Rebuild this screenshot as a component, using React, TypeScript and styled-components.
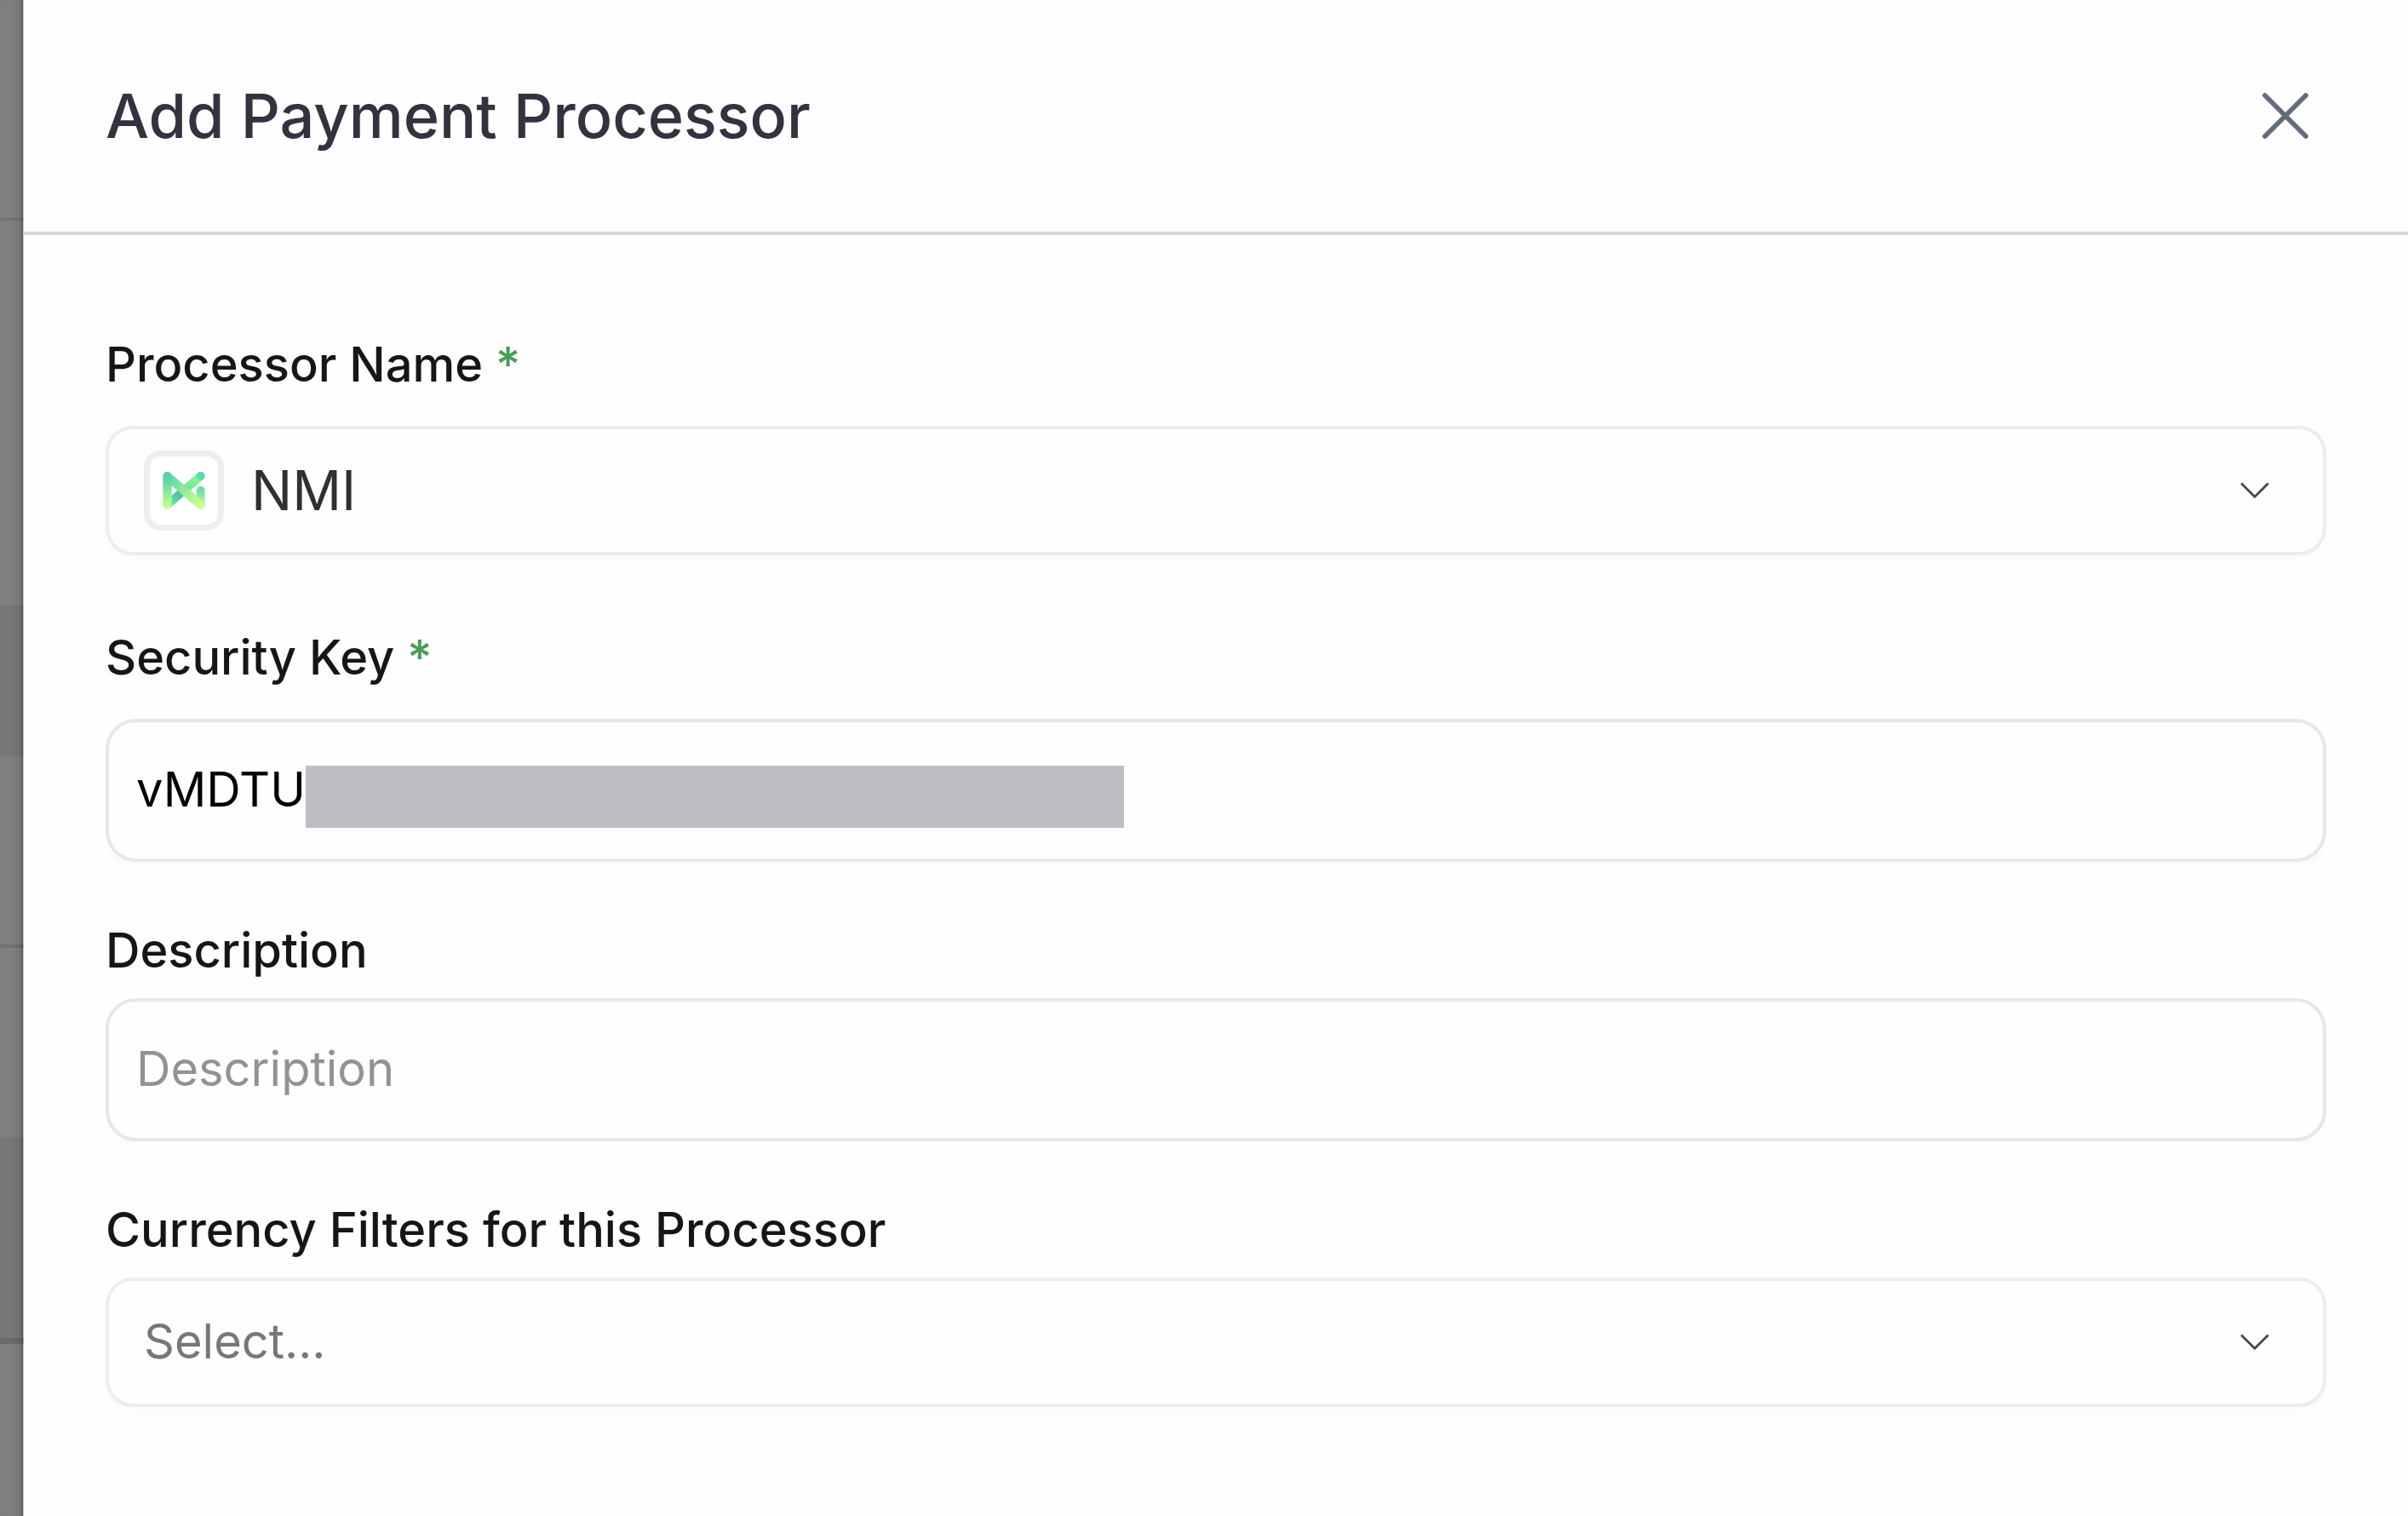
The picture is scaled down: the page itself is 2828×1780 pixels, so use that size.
import React from 'react';
import styled, { createGlobalStyle } from 'styled-components';

const GlobalStyle = createGlobalStyle`
  *, *::before, *::after { box-sizing: border-box; }
  body {
    margin: 0;
    background: #fefefe;
    font-family: Inter, "Liberation Sans", sans-serif;
  }
  button, input, select { font: inherit; }
`;

const Page = styled.div`
  display: grid;
  grid-template-columns: 28px minmax(0, 1fr);
  min-height: 100vh;
`;

const Backdrop = styled.div`
  display: flex;
  flex-direction: column;
  background: #7f7f7f;
  box-shadow: inset -1px 0 0 #c8c8c8, inset -3px 0 0 #626262, inset -12px 0 12px -8px #6a6a6a;
`;

const Band = styled.div<{ $height: number; $shaded?: boolean; $line?: number }>`
  flex: none;
  height: ${(p) => p.$height}px;
  background: ${(p) => (p.$shaded ? 'rgba(0, 0, 0, 0.06)' : 'transparent')};
  border-bottom: ${(p) => p.$line ?? 0}px solid rgba(0, 0, 0, 0.1);
`;

const Drawer = styled.main`
  display: flex;
  flex-direction: column;
  background: #fefefe;
`;

const Header = styled.header`
  display: flex;
  align-items: center;
  justify-content: space-between;
  height: 276px;
  padding: 0 96px;
  border-bottom: 4px solid #d6d6d7;
`;

const Title = styled.h1`
  margin: 0;
  color: #33323e;
  font-size: 72px;
  font-weight: 500;
  line-height: 96px;
`;

const CloseButton = styled.button`
  display: flex;
  align-items: center;
  justify-content: center;
  width: 96px;
  height: 96px;
  padding: 0;
  border: 0;
  background: none;
  color: #646b79;
  cursor: pointer;
`;

const Form = styled.form`
  display: flex;
  flex-direction: column;
  gap: 64px;
  padding: 96px;
`;

const Field = styled.div`
  display: flex;
  flex-direction: column;
  gap: 16px;
`;

const Label = styled.label<{ $required?: boolean }>`
  color: #161616;
  font-size: 56px;
  font-weight: 500;
  line-height: ${(p) => (p.$required ? 112 : 80)}px;
`;

const Star = styled.span`
  color: #479c55;
`;

const SelectBox = styled.div`
  display: flex;
  align-items: center;
  gap: 32px;
  height: 152px;
  padding: 0 63px 0 41px;
  border: 4px solid #ededef;
  border-radius: 32px;
  background: #fefefe;
  box-shadow: 0 4px 10px rgba(0, 0, 0, 0.02);
`;

const Select = styled.select<{ $placeholder?: boolean }>`
  flex: 1;
  min-width: 0;
  height: 100%;
  padding: 0 0 2px;
  border: 0;
  outline: 0;
  appearance: none;
  background: none;
  color: ${(p) => (p.$placeholder ? '#777777' : '#303030')};
  font-size: ${(p) => (p.$placeholder ? 56 : 64)}px;
`;

const LogoTile = styled.span`
  display: flex;
  align-items: center;
  justify-content: center;
  width: 94px;
  height: 94px;
  border: 7px solid #eeeef0;
  border-radius: 20px;
  background: #ffffff;
`;

const InputBox = styled.div`
  position: relative;
  height: 168px;
  border: 4px solid #e7e7e7;
  border-radius: 36px;
  background: #fefefe;
  box-shadow: 0 4px 10px rgba(0, 0, 0, 0.02);
`;

const Input = styled.input`
  width: 100%;
  height: 100%;
  padding: 0 32px 2px;
  border: 0;
  outline: 0;
  background: none;
  color: #000000;
  font-size: 56px;

  &::placeholder {
    color: #929292;
    opacity: 1;
  }
`;

const Redaction = styled.span`
  position: absolute;
  top: 51px;
  left: 231px;
  width: 961px;
  height: 73px;
  background: #bdbdc2;
`;

const CloseIcon = () => (
  <svg width="54" height="54" viewBox="0 0 54 54" fill="none" aria-hidden="true">
    <path d="M3 3L51 51M51 3L3 51" stroke="currentColor" strokeWidth="5.6" strokeLinecap="round" />
  </svg>
);

const Chevron = () => (
  <svg width="34" height="20" viewBox="0 0 34 20" fill="none" aria-hidden="true">
    <path d="M1.2 1.5L17 17.2L32.8 1.5" stroke="#4a4858" strokeWidth="2.9" />
  </svg>
);

const NmiLogo = () => (
  <svg width="50" height="44" viewBox="0 0 148 132" fill="none" aria-hidden="true">
    <defs>
      <linearGradient id="stem" x1="0" y1="0" x2="0" y2="132" gradientUnits="userSpaceOnUse">
        <stop offset="0.15" stopColor="#58d3a6" />
        <stop offset="1" stopColor="#d0ff8e" />
      </linearGradient>
      <linearGradient id="fall" x1="15" y1="15" x2="133" y2="117" gradientUnits="userSpaceOnUse">
        <stop offset="0" stopColor="#55d6a9" />
        <stop offset="1" stopColor="#d0ff8e" />
      </linearGradient>
      <linearGradient id="rise" x1="30" y1="104" x2="133" y2="15" gradientUnits="userSpaceOnUse">
        <stop offset="0" stopColor="#5de0ae" />
        <stop offset="0.3" stopColor="#4dbf98" />
        <stop offset="0.55" stopColor="#6ee79a" />
        <stop offset="1" stopColor="#8dfa94" />
      </linearGradient>
      <linearGradient id="post" x1="0" y1="51" x2="0" y2="132" gradientUnits="userSpaceOnUse">
        <stop offset="0" stopColor="#5adbb0" />
        <stop offset="1" stopColor="#d0ff8e" />
      </linearGradient>
    </defs>
    <path d="M18 114L133 15" stroke="url(#rise)" strokeWidth="30" strokeLinecap="round" />
    <circle cx="133" cy="15" r="15" fill="#5adcb3" />
    <path d="M118 66a15 15 0 0 1 30 0v50a15 15 0 0 1-30 0z" fill="url(#post)" />
    <path d="M15.500 15.500L132.500 116.500" stroke="url(#fall)" strokeWidth="31" strokeLinecap="round" />
    <path d="M0 15.500a15.500 15.500 0 0 1 31 0v101a15.500 15.500 0 0 1-31 0z" fill="url(#stem)" />
  </svg>
);

export default function App() {
  return (
    <>
      <GlobalStyle />
      <Page>
        <Backdrop>
          <Band $height={259} $line={3} />
          <Band $height={452} />
          <Band $height={177} $shaded />
          <Band $height={225} $line={4} />
          <Band $height={223} />
          <Band $height={242} $shaded $line={7} />
        </Backdrop>
        <Drawer>
          <Header>
            <Title>Add Payment Processor</Title>
            <CloseButton type="button" aria-label="Close">
              <CloseIcon />
            </CloseButton>
          </Header>
          <Form>
            <Field>
              <Label htmlFor="processor" $required>
                Processor Name <Star>*</Star>
              </Label>
              <SelectBox>
                <LogoTile>
                  <NmiLogo />
                </LogoTile>
                <Select id="processor" defaultValue="nmi">
                  <option value="nmi">NMI</option>
                </Select>
                <Chevron />
              </SelectBox>
            </Field>
            <Field>
              <Label htmlFor="security-key" $required>
                Security Key <Star>*</Star>
              </Label>
              <InputBox>
                <Input id="security-key" type="text" defaultValue="vMDTU" />
                <Redaction />
              </InputBox>
            </Field>
            <Field>
              <Label htmlFor="description">Description</Label>
              <InputBox>
                <Input id="description" type="text" placeholder="Description" />
              </InputBox>
            </Field>
            <Field>
              <Label htmlFor="currencies">Currency Filters for this Processor</Label>
              <SelectBox>
                <Select id="currencies" defaultValue="" $placeholder>
                  <option value="">Select...</option>
                </Select>
                <Chevron />
              </SelectBox>
            </Field>
          </Form>
        </Drawer>
      </Page>
    </>
  );
}
